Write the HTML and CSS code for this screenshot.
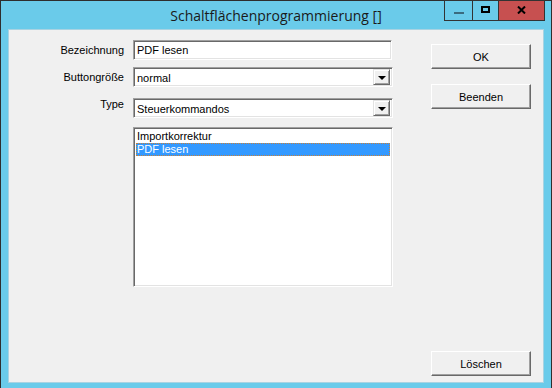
FILE: index.html
```html
<!DOCTYPE html>
<html>
<head>
<meta charset="utf-8">
<link rel="stylesheet" href="styles.css">
</head>
<body>
<div class="window">
  <div class="titlebar">
    <span class="title">Schaltflächenprogrammierung []</span>
    <div class="caption">
      <div class="cbtn min"><span class="min-glyph"></span></div>
      <div class="cbtn max"><span class="max-glyph"></span></div>
      <div class="cbtn close">
        <svg width="9" height="8" viewBox="0 0 9 8"><path d="M1 0.5 L8 7.5 M8 0.5 L1 7.5" stroke="#000" stroke-width="2" fill="none"/></svg>
      </div>
    </div>
  </div>
  <div class="client">
    <div class="form">
      <div class="row r1">
        <label class="lbl">Bezeichnung</label>
        <div class="field edit">PDF lesen</div>
      </div>
      <div class="row r2">
        <label class="lbl">Buttongröße</label>
        <div class="field combo"><span class="val">normal</span><span class="drop"><span class="arrow"></span></span></div>
      </div>
      <div class="row r3">
        <label class="lbl lbl-top">Type</label>
        <div class="field combo"><span class="val">Steuerkommandos</span><span class="drop"><span class="arrow"></span></span></div>
      </div>
      <div class="list">
        <div class="item">Importkorrektur</div>
        <div class="item sel">PDF lesen</div>
      </div>
    </div>
    <div class="buttons">
      <div class="btn ok">OK</div>
      <div class="btn">Beenden</div>
      <div class="btn del">Löschen</div>
    </div>
  </div>
</div>
</body>
</html>
```
FILE: styles.css
```css
html, body {
  margin: 0;
  padding: 0;
  background: #6acbea;
}
.window {
  position: relative;
  width: 552px;
  height: 388px;
  box-sizing: border-box;
  border: 1px solid #2e2e2e;
  border-bottom: none;
  padding: 0 7px 6px 7px;
  background: #6acbea;
  font-family: "Liberation Sans", Arial, sans-serif;
  font-size: 11px;
  color: #000;
}
.titlebar {
  height: 28px;
  display: flex;
  align-items: center;
  justify-content: center;
}
.title {
  font-family: "Open Sans", "Noto Sans", sans-serif;
  font-size: 14px;
  color: #1a1a1a;
  margin-top: 1px;
}
.caption {
  position: absolute;
  top: -1px;
  right: 6px;
  display: flex;
  height: 21px;
  box-sizing: border-box;
  border: 1px solid #333;
}
.cbtn {
  height: 19px;
  display: flex;
  align-items: center;
  justify-content: center;
  border-right: 1px solid #333;
}
.cbtn.close { border-right: none; }
.min { width: 27px; }
.max { width: 25px; }
.close { width: 45px; background: #c75050; }
.min-glyph {
  width: 10px;
  height: 2px;
  background: #3a6b7f;
  margin-top: 5px;
}
.max-glyph {
  width: 9px;
  height: 7px;
  box-sizing: border-box;
  border: 2px solid #000;
  margin-top: -2px;
}
.close svg { margin-top: -2px; }
.client {
  height: 354px;
  box-sizing: border-box;
  border: 1px solid #a9d3e2;
  background: #f0f0f0;
  display: flex;
}
.form {
  display: flex;
  flex-direction: column;
  padding-top: 10px;
}
.row {
  display: flex;
  align-items: center;
  gap: 9px;
  height: 20px;
}
.r2 { margin-top: 7px; }
.r3 { margin-top: 11px; align-items: flex-start; }
.lbl {
  width: 115px;
  text-align: right;
  white-space: nowrap;
}
.lbl-top { margin-top: 0px; }
.field {
  box-sizing: border-box;
  width: 260px;
  height: 20px;
  background: #fff;
  border-top: 1px solid #a0a0a0;
  border-left: 1px solid #a0a0a0;
  border-right: 1px solid #fff;
  border-bottom: 1px solid #fff;
  box-shadow: inset 1px 1px 0 #696969, inset -1px -1px 0 #e3e3e3;
  display: flex;
  align-items: center;
  padding-left: 3px;
}
.edit { width: 259px; }
.combo { justify-content: space-between; padding-right: 2px; }
.val { padding-top: 1px; }
.drop {
  width: 17px;
  height: 16px;
  box-sizing: border-box;
  background: #f0f0f0;
  border-top: 1px solid #e3e3e3;
  border-left: 1px solid #e3e3e3;
  border-right: 1px solid #696969;
  border-bottom: 1px solid #696969;
  box-shadow: inset 1px 1px 0 #fff, inset -1px -1px 0 #a0a0a0;
  display: flex;
  align-items: center;
  justify-content: center;
}
.arrow {
  width: 0;
  height: 0;
  border-left: 4px solid transparent;
  border-right: 4px solid transparent;
  border-top: 4px solid #000;
  margin-top: 1px;
}
.list {
  margin-top: 9px;
  margin-left: 124px;
  width: 260px;
  height: 160px;
  box-sizing: border-box;
  background: #fff;
  border-top: 1px solid #a0a0a0;
  border-left: 1px solid #a0a0a0;
  border-right: 1px solid #fff;
  border-bottom: 1px solid #fff;
  box-shadow: inset 1px 1px 0 #696969, inset -1px -1px 0 #e3e3e3;
  padding: 2px 2px 0 2px;
}
.item {
  height: 13px;
  line-height: 13px;
  padding-left: 1px;
  white-space: nowrap;
}
.item.sel {
  background: #3399ff;
  color: #fff;
  outline: 1px dotted #c7813a;
  outline-offset: -1px;
}
.buttons {
  display: flex;
  flex-direction: column;
  margin-left: 38px;
  padding-top: 14px;
  padding-bottom: 6px;
  gap: 15px;
}
.btn {
  width: 100px;
  height: 25px;
  box-sizing: border-box;
  background: #f0f0f0;
  border-top: 1px solid #fff;
  border-left: 1px solid #fff;
  border-right: 1px solid #696969;
  border-bottom: 1px solid #696969;
  box-shadow: inset -1px -1px 0 #a0a0a0;
  display: flex;
  align-items: center;
  justify-content: center;
}
.btn.del { margin-top: auto; }
```
